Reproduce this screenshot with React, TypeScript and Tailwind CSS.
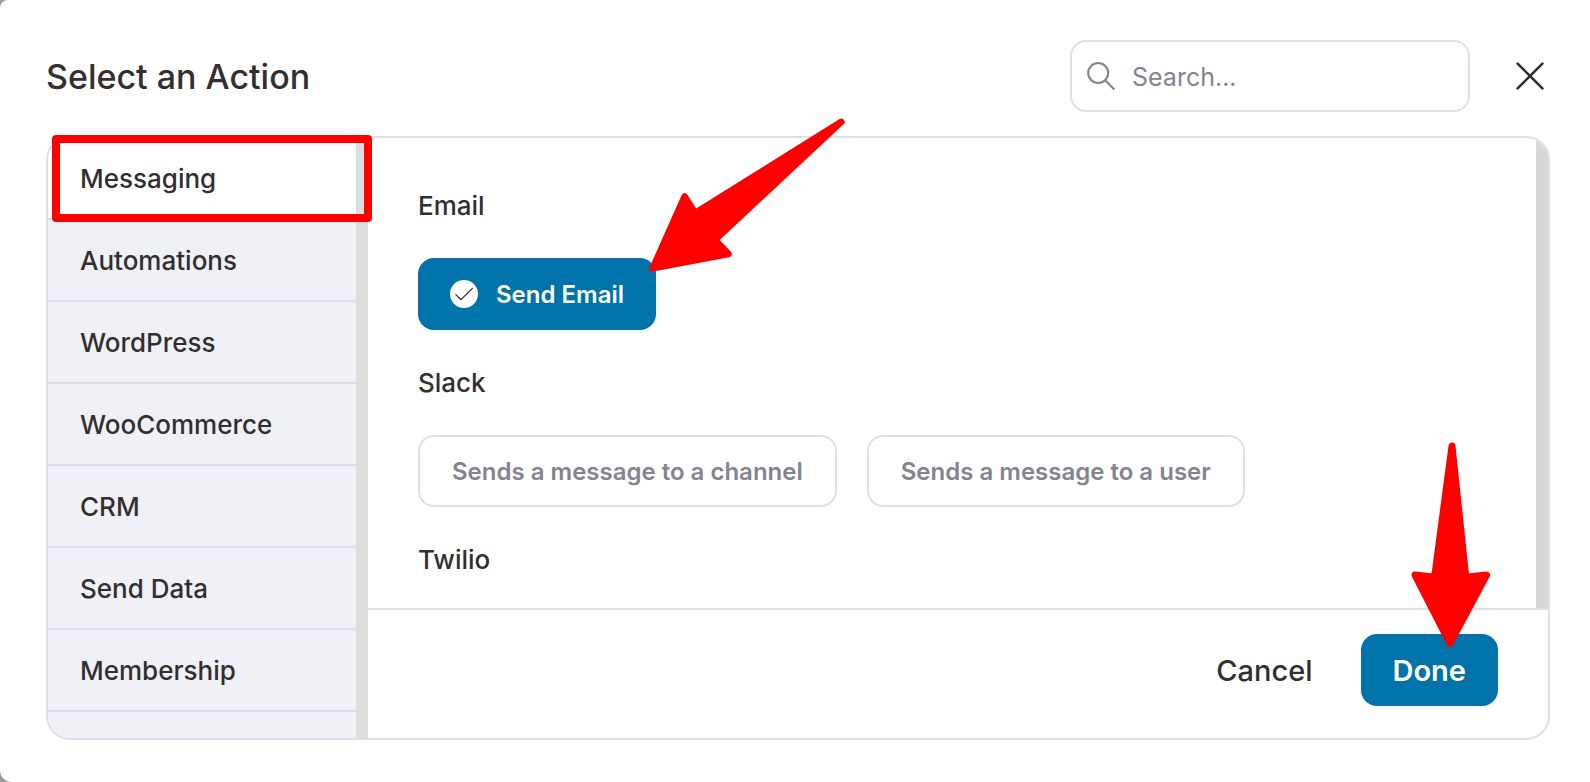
import { useState } from "react";
import clsx from "clsx";

// ── Dialog content ────────────────────────────────────────────────
const categories = [
  "Messaging",
  "Automations",
  "WordPress",
  "WooCommerce",
  "CRM",
  "Send Data",
  "Membership",
];

const groups = [
  { name: "Email", actions: ["Send Email"] },
  { name: "Slack", actions: ["Sends a message to a channel", "Sends a message to a user"] },
  { name: "Twilio", actions: [] },
];

function SearchIcon() {
  return (
    <svg className="w-7 h-7 shrink-0 overflow-visible" viewBox="0 0 28 28" fill="none" stroke="#85838f" strokeWidth="2.1" strokeLinecap="round" aria-hidden="true">
      <circle cx="10.2" cy="11" r="10" />
      <path d="M17.4 18.4l8.4 8.6" />
    </svg>
  );
}

function CloseIcon() {
  return (
    <svg className="w-7 h-7" viewBox="0 0 28 28" fill="none" stroke="#332f2f" strokeWidth="2.6" strokeLinecap="round" aria-hidden="true">
      <path d="M1.6 1.6l24.8 24.8M26.4 1.6L1.6 26.4" />
    </svg>
  );
}

function CheckIcon() {
  return (
    <svg className="w-7 h-7 shrink-0" viewBox="0 0 28 28" fill="none" aria-hidden="true">
      <circle cx="14" cy="14" r="14" fill="#fff" />
      <path d="M5.8 14.6l5.2 5L22.4 8.4" stroke="#332f2f" strokeWidth="1.3" strokeLinecap="round" />
    </svg>
  );
}

function ActionButton({ label, selected, onClick }: { label: string; selected: boolean; onClick: () => void }) {
  return (
    <button
      type="button"
      aria-pressed={selected}
      onClick={onClick}
      className={clsx(
        "h-18 flex items-center gap-[18px] px-8 rounded-2xl text-[24px] leading-8 font-semibold whitespace-nowrap",
        selected ? "bg-[#0073aa] text-white" : "border-2 border-[#dfddec] text-[#85838f]"
      )}
    >
      {selected && <CheckIcon />}
      <span className="pt-0.5">{label}</span>
    </button>
  );
}

export default function App() {
  const [category, setCategory] = useState("Messaging");
  const [action, setAction] = useState("Send Email");
  const [query, setQuery] = useState("");

  return (
    <div className="h-screen bg-[#999999] font-['Inter',sans-serif] text-[#332f2f]">
      <div role="dialog" aria-labelledby="dialog-title" className="relative h-full flex flex-col bg-white rounded-tl-lg rounded-bl-xl pt-10 pb-[42px] pl-[46px] pr-10">

        {/* Header */}
        <header className="flex items-center mb-6">
          <h1 id="dialog-title" className="flex-1 pt-0.5 text-[34px] leading-10 font-medium">Select an Action</h1>
          <label className="w-[400px] h-18 flex items-center gap-4 px-4 border-2 border-[#dfddec] rounded-2xl">
            <SearchIcon />
            <input
              type="text"
              aria-label="Search"
              placeholder="Search..."
              value={query}
              onChange={(e) => setQuery(e.target.value)}
              className="flex-1 min-w-0 pt-0.5 text-[25px] leading-8 outline-none placeholder:text-[#85838f]"
            />
          </label>
          <button type="button" aria-label="Close" className="ml-[46px] mr-1.5">
            <CloseIcon />
          </button>
        </header>

        <div className="flex-1 min-h-0 flex border-2 border-[#dfddec] rounded-3xl overflow-hidden">

          {/* Categories */}
          <nav className="w-80 shrink-0 overflow-hidden bg-[#f0f1f7] border-r-12 border-[#dddddd]">
            {categories.map((name) => (
              <button
                key={name}
                type="button"
                onClick={() => setCategory(name)}
                className={clsx(
                  "w-full h-[82px] flex items-center px-8 pt-0.5 border-b-2 border-[#dfddec] text-[26px] leading-8 font-medium",
                  name === category && "bg-white"
                )}
              >
                {name}
              </button>
            ))}
          </nav>

          <div className="flex-1 min-w-0 flex flex-col">
            {/* Actions */}
            <div className="flex-1 min-h-0 overflow-hidden border-r-12 border-[#d8d8d8] pl-[50px] pt-[52px] flex flex-col gap-[37px]">
              {groups.map((group) => (
                <section key={group.name} className="shrink-0">
                  <h2 className="text-[26px] leading-8 font-medium mb-9">{group.name}</h2>
                  <div className="flex gap-[30px]">
                    {group.actions.map((label) => (
                      <ActionButton key={label} label={label} selected={label === action} onClick={() => setAction(label)} />
                    ))}
                  </div>
                </section>
              ))}
            </div>

            {/* Footer */}
            <footer className="shrink-0 flex items-center justify-end gap-12 border-t-2 border-[#dfddec] pt-6 pb-8 pr-[50px] text-[29px] leading-9">
              <button type="button" className="pt-0.5 font-medium">Cancel</button>
              <button type="button" className="h-18 px-8 pt-0.5 rounded-2xl bg-[#0073aa] text-white font-semibold">Done</button>
            </footer>
          </div>
        </div>

        {/* Callouts drawn over the dialog */}
        <div className="absolute left-[52px] top-[135px] w-80 h-[87px] border-8 border-[#ff0000] rounded pointer-events-none" />
        <svg className="absolute left-[640px] top-[110px] w-[210px] h-[170px] pointer-events-none" viewBox="640 110 210 170" aria-hidden="true">
          <path d="M841.3 121.9L695.2 213.1L684.6 196.5L652.7 268.3L728.5 254L715 239.8Z" fill="#ff0000" stroke="#ff0000" strokeWidth="6.6" strokeLinejoin="round" />
        </svg>
        <svg className="absolute right-[90px] bottom-[122px] w-[100px] h-[220px] pointer-events-none" viewBox="1400 440 100 220" aria-hidden="true">
          <path d="M1452 446L1434.6 577.3L1415 575L1450 643.3L1486.5 575L1465.8 577.3Z" fill="#ff0000" stroke="#ff0000" strokeWidth="7" strokeLinejoin="round" />
        </svg>
      </div>
    </div>
  );
}
